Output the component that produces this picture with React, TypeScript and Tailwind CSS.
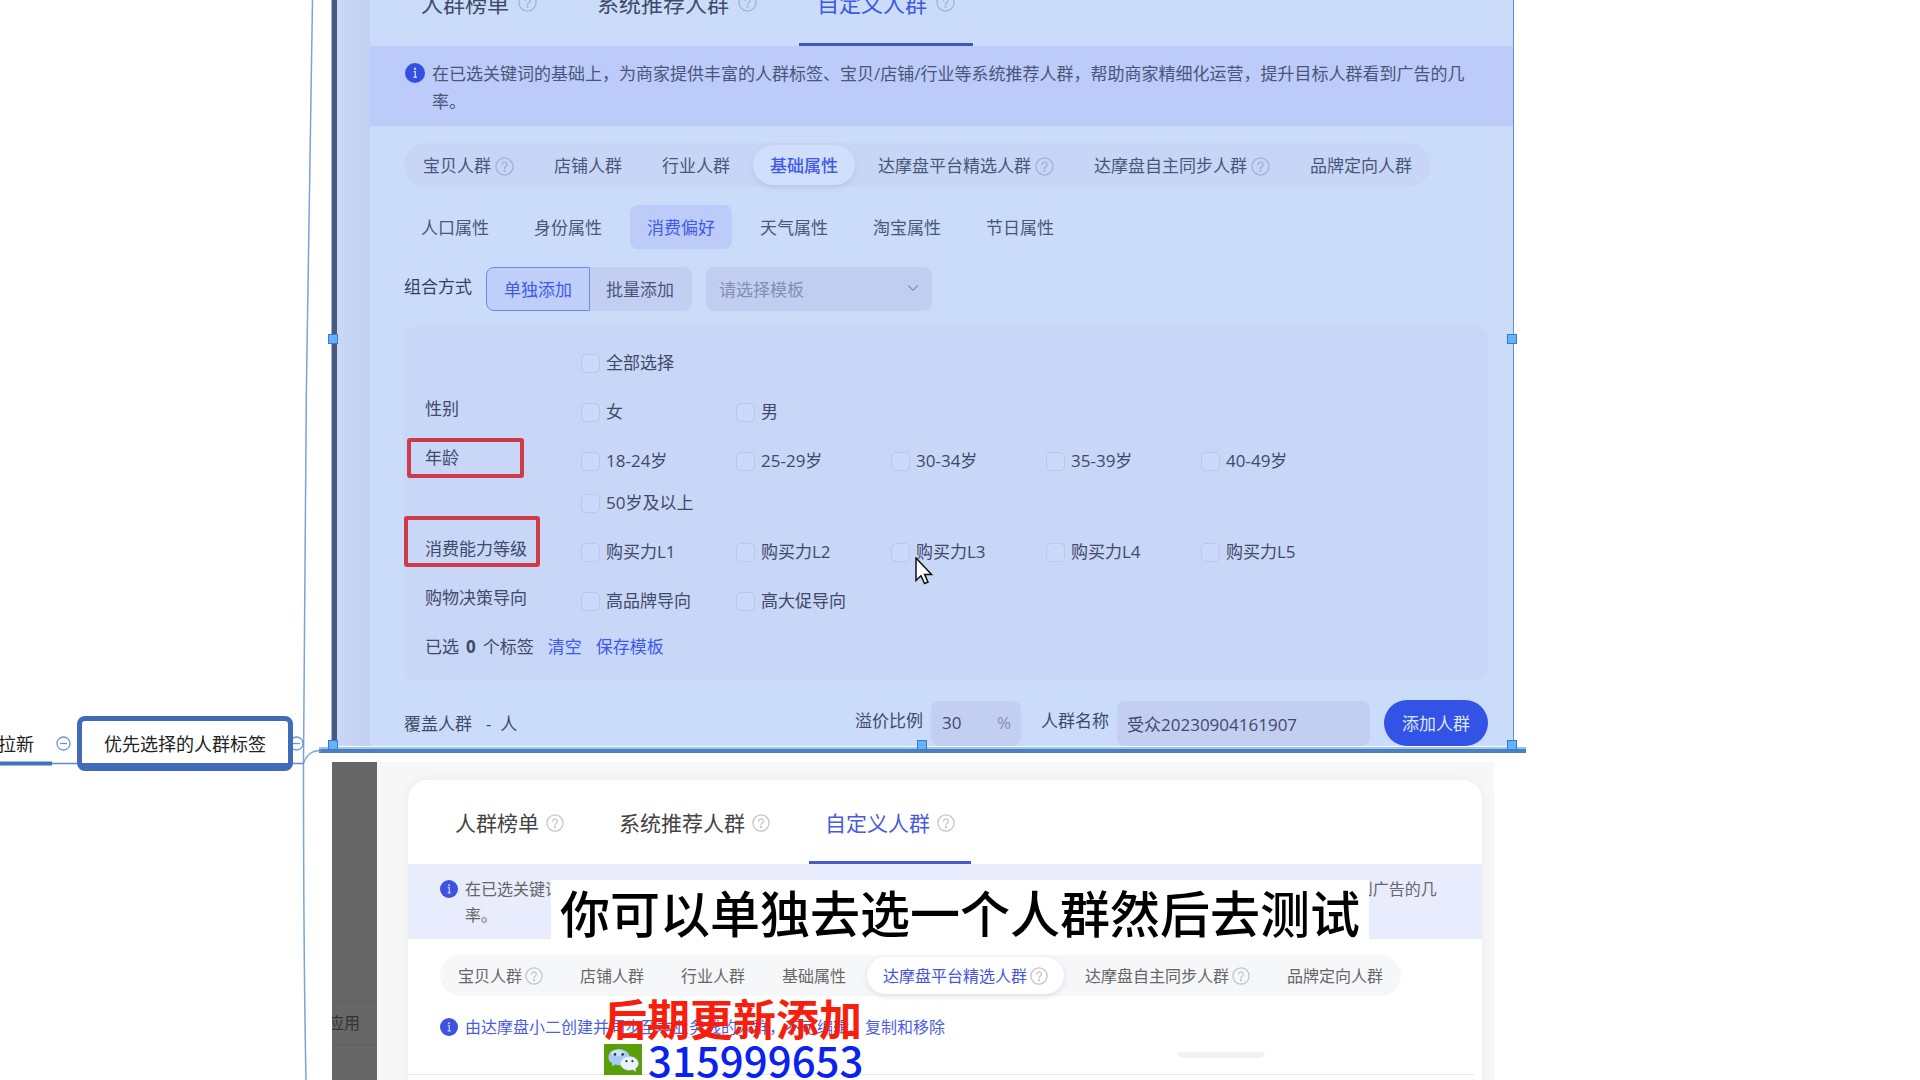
import React from 'react';
import clsx from 'clsx';
import { ChevronDown } from 'lucide-react';

interface TabItem {
  label: string;
  help?: boolean;
}

interface FilterRow {
  label: string;
  options: string[];
}

const HEADER_TABS: TabItem[] = [
  { label: '人群榜单', help: true },
  { label: '系统推荐人群', help: true },
  { label: '自定义人群', help: true },
];

const CROWD_TABS: TabItem[] = [
  { label: '宝贝人群', help: true },
  { label: '店铺人群' },
  { label: '行业人群' },
  { label: '基础属性' },
  { label: '达摩盘平台精选人群', help: true },
  { label: '达摩盘自主同步人群', help: true },
  { label: '品牌定向人群' },
];

const ATTRIBUTE_TABS = ['人口属性', '身份属性', '消费偏好', '天气属性', '淘宝属性', '节日属性'];

const FILTER_ROWS: FilterRow[] = [
  { label: '', options: ['全部选择'] },
  { label: '性别', options: ['女', '男'] },
  { label: '年龄', options: ['18-24岁', '25-29岁', '30-34岁', '35-39岁', '40-49岁', '50岁及以上'] },
  { label: '消费能力等级', options: ['购买力L1', '购买力L2', '购买力L3', '购买力L4', '购买力L5'] },
  { label: '购物决策导向', options: ['高品牌导向', '高大促导向'] },
];

const NOTICE =
  '在已选关键词的基础上，为商家提供丰富的人群标签、宝贝/店铺/行业等系统推荐人群，帮助商家精细化运营，提升目标人群看到广告的几率。';

const HelpIcon = ({ className }: { className?: string }) => (
  <svg viewBox="0 0 20 20" className={clsx('shrink-0', className)} fill="none" stroke="currentColor" strokeWidth="1.4" aria-hidden="true">
    <circle cx="10" cy="10" r="9" />
    <path d="M7.4 8a2.6 2.6 0 1 1 3.9 2.2c-.9.5-1.3.9-1.3 1.9" strokeLinecap="round" />
    <circle cx="10" cy="14.6" r=".5" fill="currentColor" />
  </svg>
);

const InfoIcon = ({ className }: { className?: string }) => (
  <svg viewBox="0 0 20 20" className={clsx('shrink-0', className)} aria-hidden="true">
    <circle cx="10" cy="10" r="10" fill="currentColor" />
    <circle cx="10" cy="5.8" r="1.2" fill="#c3cefb" />
    <path d="M8.6 8.6H10.3V14.2M8.4 14.2H12" stroke="#c3cefb" strokeWidth="1.4" fill="none" />
  </svg>
);

const WechatIcon = () => (
  <svg viewBox="0 0 38 31" className="h-[31px] w-[38px] shrink-0" aria-hidden="true">
    <rect width="38" height="31" fill="#5a9e08" />
    <path d="M15 5C9 5 4.4 8.6 4.4 13.2c0 2.7 1.5 4.9 4 6.4L7.6 22.6l3.6-2c1.2.4 2.5.6 3.8.6 6 0 10.6-3.6 10.6-8S21 5 15 5Z" fill="#a9cbf3" />
    <ellipse cx="13.5" cy="9" rx="6.5" ry="3" fill="#cfe3fb" />
    <circle cx="11" cy="10.4" r="1.3" fill="#26384e" />
    <circle cx="18.6" cy="10.4" r="1.3" fill="#26384e" />
    <path d="M25.5 12.6c-5 0-9 3-9 6.8s4 6.8 9 6.8c1.100 0 2.200-.2 3.200-.5l3.300 1.900-.8-2.900c2-1.300 3.200-3.200 3.200-5.300 0-3.800-3.900-6.800-8.900-6.800Z" fill="#e9f2fd" stroke="#b7cde8" strokeWidth=".6" />
    <circle cx="22.4" cy="17.2" r="1.1" fill="#26384e" />
    <circle cx="28.4" cy="17.2" r="1.1" fill="#26384e" />
  </svg>
);

const Handle = ({ className }: { className: string }) => (
  <span className={clsx('absolute z-10 size-2.5 border border-[#2f7fd6] bg-[#68b0f8]', className)} />
);

/** Branches and topics of the map, left of the attached images. */
const TopicBranch = () => (
  <aside className="relative w-[331px] shrink-0 text-[18px] leading-6 text-[#222]">
    <svg className="absolute left-0 top-0 h-[1080px] w-[331px]" fill="none" aria-hidden="true">
      <path d="M312.5 0C308 240 304 520 303.5 762C303.5 860 304 980 306 1080" stroke="#7ba3d8" strokeWidth="1.5" />
      <path d="M303.5 763C307 755 311 750.5 321 750.5" stroke="#7ba3d8" strokeWidth="1.5" />
      <path d="M52 763.5H77M292 763.5H304" stroke="#5e8dcc" strokeWidth="1.5" />
      <path d="M0 763.5H52" stroke="#4472b8" strokeWidth="4" />
      <g stroke="#6c96d2" strokeWidth="1.3">
        <circle cx="63.5" cy="743.5" r="6.5" fill="#fff" />
        <path d="M60 743.5H67" />
        <circle cx="296.5" cy="743.5" r="6.5" fill="#fff" />
        <path d="M293 743.5H300" />
      </g>
    </svg>
    <span className="absolute right-[297px] top-8 mt-[700px] whitespace-nowrap">拉新</span>
    <div className="absolute left-[77px] top-[716px] flex h-[55px] w-[216px] items-center justify-center whitespace-nowrap rounded-lg border-[5px] border-b-[8px] border-[#416bb8] bg-white pt-1">
      优先选择的人群标签
    </div>
  </aside>
);

/** Upper image, selected on the canvas, so every colour carries the blue selection tint. */
const SelectedCard = () => (
  <article className="relative flex border-r border-[#5e8fe0] text-[17px] leading-7 text-[#4a5678]">
    <div className="w-1.5 shrink-0 border-l border-[#8fb6ee] bg-[#475a7c]" />
    <div className="w-[33px] shrink-0 bg-linear-to-r from-[#c9d8f6] to-[#c2d1f1]" />
    <div className="min-w-0 flex-1 bg-[#cbdcfa]">
      <nav className="-mt-10 flex h-[86px] gap-6 pl-[33px] text-[22px]">
        {HEADER_TABS.map(({ label }, index) => (
          <button
            key={label}
            className={clsx(
              'flex items-center gap-[9px] whitespace-nowrap border-b-[3px] px-[18px] pt-0.5',
              index === 2 ? 'border-[#3f55bf] text-[#4057e0]' : 'border-transparent text-[#3f4a68]'
            )}
          >
            {label}
            <HelpIcon className="size-[19px] text-[#a5b3d6]" />
          </button>
        ))}
      </nav>

      <div className="flex h-20 gap-[7px] bg-[#bccbf9] pl-[35px] pr-10 pt-3.5">
        <InfoIcon className="mt-[3px] size-5 text-[#3350e2]" />
        <p>{NOTICE}</p>
      </div>

      <div className="pl-[34px] pr-[25px] pt-[17px]">
        <nav className="flex h-11 w-fit items-center gap-1.5 rounded-full bg-[#c7d6f6] px-0.5">
          {CROWD_TABS.map(({ label, help }) => (
            <button
              key={label}
              className={clsx(
                'flex h-10 items-center gap-1 whitespace-nowrap rounded-full px-[17px] pt-0.5',
                label === '基础属性' && 'bg-[#cfdffc] font-medium text-[#3f5aea] shadow-[0_2px_6px_#b4c4e8]'
              )}
            >
              {label}
              {help && <HelpIcon className="size-[19px] text-[#a3b1d3]" />}
            </button>
          ))}
        </nav>

        <nav className="mt-[18px] flex h-11 gap-[11px]">
          {ATTRIBUTE_TABS.map((label) => (
            <button
              key={label}
              className={clsx(
                'whitespace-nowrap rounded-lg px-[17px] pt-0.5',
                label === '消费偏好' && 'bg-[#bccbf8] text-[#3f5aea]'
              )}
            >
              {label}
            </button>
          ))}
        </nav>

        <div className="mt-[18px] flex h-11 items-center">
          <span className="pb-1 text-[#35405f]">组合方式</span>
          <div className="ml-3.5 flex h-11">
            <button className="rounded-l-lg border border-[#6f88ea] bg-[#c0cffa] px-[17px] pt-0.5 text-[#3f5aea]">单独添加</button>
            <button className="rounded-r-lg bg-[#c2cff3] pl-4 pr-[18px] pt-0.5">批量添加</button>
          </div>
          <div className="relative ml-3.5">
            <select aria-label="请选择模板" className="h-11 w-[226px] appearance-none rounded-lg bg-[#c1cef2] pl-[13px] pt-0.5 text-[#8390b3]">
              <option>请选择模板</option>
            </select>
            <ChevronDown className="pointer-events-none absolute right-2.5 top-3 size-[18px] text-[#8390b3]" strokeWidth={1.5} />
          </div>
        </div>

        <div className="relative mt-[15px] flex flex-col gap-[7px] rounded-xl bg-[#c8d6f7] pb-3.5 pt-[15px] text-[#3f4a6a]">
          <span className="absolute left-[3px] top-28 h-10 w-[117px] rounded-[3px] border-4 border-[#cf3a47]" />
          <span className="absolute left-0 top-[190px] h-[51px] w-[136px] rounded-[3px] border-4 border-[#cf3a47]" />
          {FILTER_ROWS.map(({ label, options }) => (
            <fieldset key={options[0]} aria-label={label || '全部'} className="flex">
              <span className="relative w-[177px] shrink-0 pl-[21px] pt-[5px]">{label}</span>
              <div className="grid grid-cols-[repeat(5,155px)]">
                {options.map((option) => (
                  <label key={option} className="flex h-[42px] items-center gap-1.5 whitespace-nowrap pt-0.5">
                    <input type="checkbox" className="size-[19px] appearance-none rounded-[5px] border border-[#b8c7ea] bg-[#cbdafa]" />
                    {option}
                  </label>
                ))}
              </div>
            </fieldset>
          ))}
          <div className="flex h-[38px] items-center pl-[21px]">
            已选 <b className="mx-[7px]">0</b> 个标签
            <button className="ml-3.5 text-[#3f5aea]">清空</button>
            <button className="ml-3.5 text-[#3f5aea]">保存模板</button>
          </div>
        </div>

        <div className="mt-5 flex h-[46px] items-center text-[#3f4a6a]">
          <span className="pt-0.5">覆盖人群</span>
          <span className="ml-3.5 pt-0.5 whitespace-pre">-  人</span>
          <label htmlFor="premium" className="ml-auto mr-2 pb-1">溢价比例</label>
          <div className="flex h-[45px] w-[90px] items-center rounded-lg bg-[#c2cff3] pr-2.5">
            <input id="premium" defaultValue="30" className="w-full min-w-0 bg-transparent pl-[11px] outline-none" />
            <span className="text-[#8390b3]">%</span>
          </div>
          <label htmlFor="crowd-name" className="ml-5 mr-2 pb-1">人群名称</label>
          <input id="crowd-name" defaultValue="受众20230904161907" className="h-[45px] w-[253px] rounded-lg bg-[#c2cff3] px-2.5 outline-none" />
          <button className="ml-3.5 h-[46px] rounded-full bg-[#3353e6] px-[18px] pt-0.5 text-[#dbe6ff]">添加人群</button>
        </div>
      </div>
    </div>

    <Handle className="-left-[3px] top-[334px]" />
    <Handle className="-right-1 top-[334px]" />
    <Handle className="-bottom-1 -left-[3px]" />
    <Handle className="-bottom-1 left-1/2 -translate-x-1/2" />
    <Handle className="-bottom-1 -right-1" />
  </article>
);

const PlainCard = () => (
  <article className="ml-px mr-5 mt-[9px] flex text-[16px] leading-[26px] text-[#666]">
    <div className="w-[45px] shrink-0 overflow-hidden bg-[#666] pt-[239px] text-[#333]">
      <div className="-ml-1 border-b border-t border-[#606060] py-2">应用</div>
    </div>
    <div className="min-w-0 flex-1 bg-[#f7f7f7] pl-[31px] pr-3 pt-[18px]">
      <div className="h-[420px] rounded-t-[20px] bg-white shadow-[0_0_10px_#ebebeb]">
        <nav className="flex h-[84px] gap-[23px] pl-[31px] text-[21px]">
          {HEADER_TABS.map(({ label }, index) => (
            <button
              key={label}
              className={clsx(
                'flex items-center gap-[7px] whitespace-nowrap border-b-[3px] px-4 pt-1',
                index === 2 ? 'border-[#4a58cc] text-[#4a5ae0]' : 'border-transparent text-[#444]'
              )}
            >
              {label}
              <HelpIcon className="size-[18px] text-[#c4c4c8]" />
            </button>
          ))}
        </nav>

        <div className="flex h-[75px] gap-[7px] bg-[#e9ecfd] pl-8 pr-9 pt-3">
          <InfoIcon className="mt-1 size-[18px] text-[#3d53e0]" />
          <p>{NOTICE}</p>
        </div>

        <nav className="ml-8 mt-4 flex h-[41px] w-fit items-center gap-[5px] rounded-full bg-[#f6f7f9] px-0.5">
          {CROWD_TABS.map(({ label, help }) => (
            <button
              key={label}
              className={clsx(
                'flex h-[37px] items-center gap-[3px] whitespace-nowrap rounded-full px-4',
                label === '达摩盘平台精选人群' && 'bg-white text-[#4456e0] shadow-[0_2px_6px_#dcdee6]'
              )}
            >
              {label}
              {help && <HelpIcon className="size-[18px] text-[#c4c4c8]" />}
            </button>
          ))}
        </nav>

        <div className="ml-8 mt-[18px] flex gap-[7px] text-[#4d5ee0]">
          <InfoIcon className="mt-1 size-[18px] text-[#3d53e0]" />
          <p>由达摩盘小二创建并同步至本业务线的人群，不可编辑、复制和移除</p>
        </div>

        <div className="ml-auto mr-[217px] mt-3 h-1.5 w-[88px] rounded-b-full bg-[#f1f2f7]" />
        <hr className="mr-2 mt-4 border-[#e8e8ec]" />
      </div>
    </div>
  </article>
);

const Cursor = () => (
  <svg viewBox="0 0 18 28" className="absolute left-[915px] top-[557px] z-20 h-7 w-[18px]" aria-hidden="true">
    <path d="M1 1V23.5L6 18.8L9.5 26.5L13 25L9.6 17.4H16.5Z" fill="#fff" stroke="#111" strokeWidth="1.5" />
  </svg>
);

export default function App() {
  return (
    <main className="relative flex h-screen overflow-hidden bg-white font-['Open_Sans','Noto_Sans_CJK_SC',sans-serif]">
      <TopicBranch />
      <section className="min-w-0 flex-1 pr-[406px]">
        <SelectedCard />
        <div className="-ml-3 -mr-3 mt-px h-1.5 border-b-4 border-t-2 border-b-[#4a80bd] border-t-[#9fc4f0]" />
        <PlainCard />
      </section>
      <Cursor />

      {/* Subtitle and contact overlay */}
      <p className="absolute left-[551px] top-[880px] z-20 flex h-[59px] w-[818px] items-center justify-center whitespace-nowrap bg-white pt-0.5 font-['Noto_Sans_CJK_SC',sans-serif] text-[50px] font-medium leading-none text-black">
        你可以单独去选一个人群然后去测试
      </p>
      <div className="absolute left-[604px] top-[996px] z-20 whitespace-nowrap font-['Noto_Sans_CJK_SC',sans-serif] text-[42px] font-medium leading-[42px]">
        <p className="text-[43px] font-bold text-[#f81e0c]">后期更新添加</p>
        <p className="flex items-center gap-1.5 text-[#0a22ee]">
          <WechatIcon />
          315999653
        </p>
      </div>
    </main>
  );
}
